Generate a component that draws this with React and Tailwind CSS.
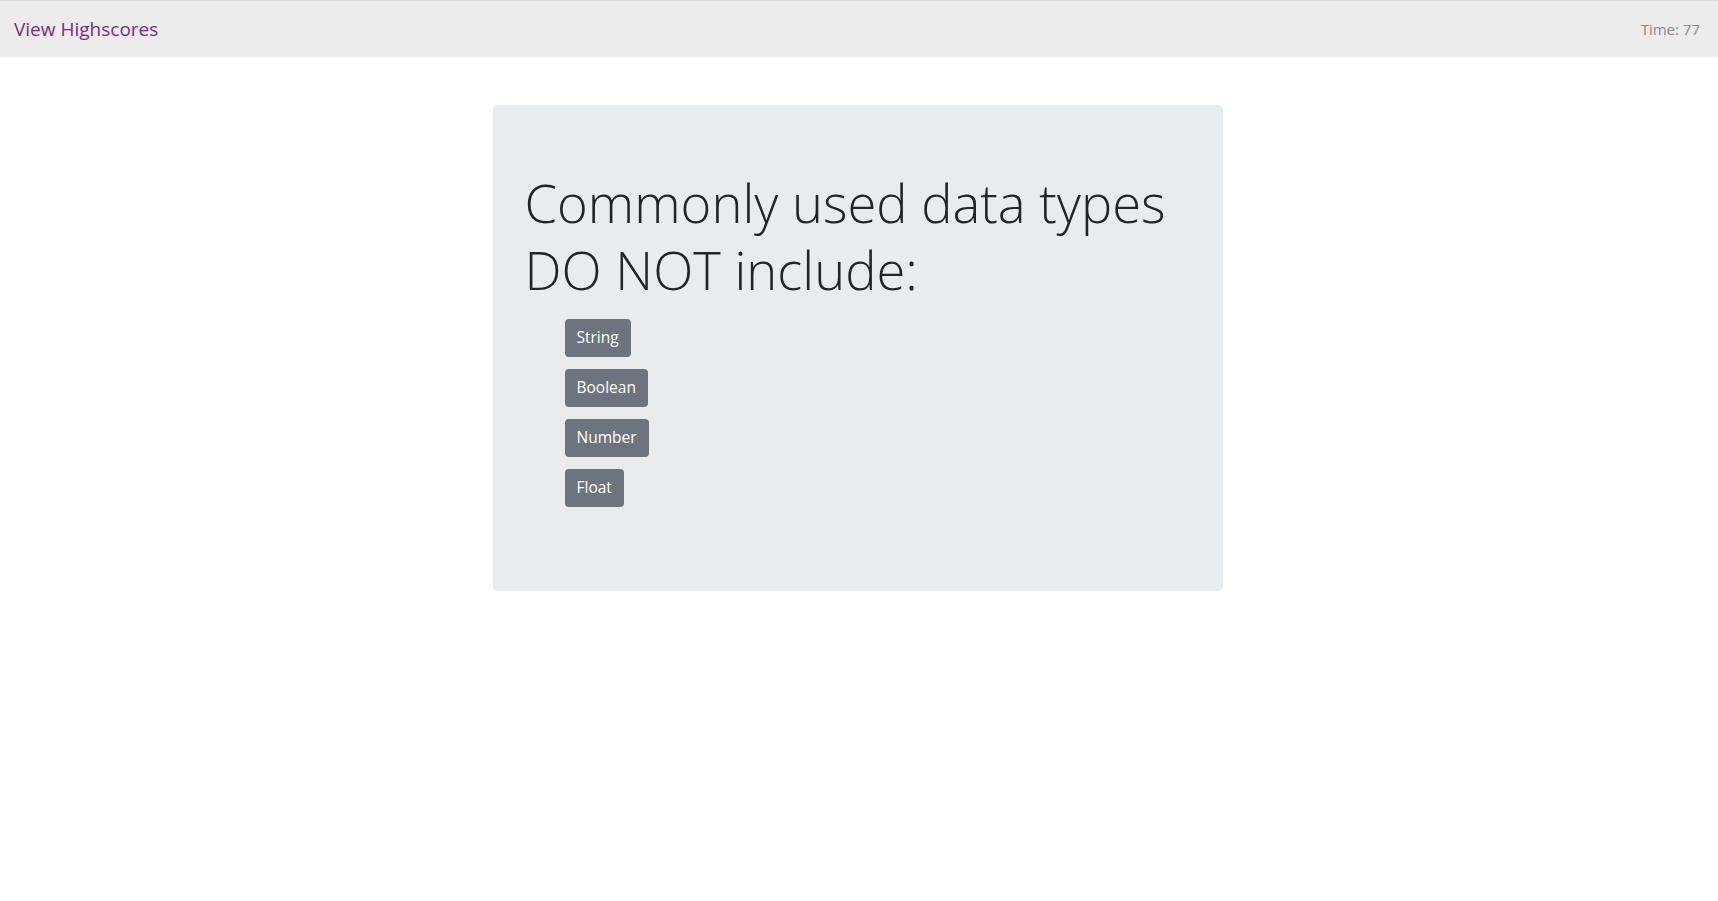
export default function App() {
  const items = ["String", "Boolean", "Number", "Float"];
  return (
    <div className="min-h-[901px] bg-white" style={{ fontFamily: '"Open Sans", "Noto Sans", sans-serif' }}>
      <nav className="flex h-[57px] items-center justify-between border-t border-[#dcdcdc] bg-[#ececec] pl-[14px] pr-[18px]">
        <a className="text-[19px] text-[#7b2a88]">View Highscores</a>
        <span className="text-[15px] text-[#8a8a8a]">Time: 77</span>
      </nav>
      <div className="flex justify-center pr-[3px] pt-[48px]">
        <div className="w-[730px] rounded-[5px] bg-[#e9ecef] px-[32px] pb-[84px] pt-[64px]">
          <h1 className="text-[52.5px] font-light leading-[67px] text-[#212529]">
            Commonly used data types DO NOT include:
          </h1>
          <ul className="mt-[16px] flex flex-col gap-[12px] pl-[40px]">
            {items.map((t) => (
              <li key={t}>
                <button className="h-[38px] rounded-[4px] bg-[#6c757d] px-[12px] text-[15.5px] text-white">
                  {t}
                </button>
              </li>
            ))}
          </ul>
        </div>
      </div>
    </div>
  );
}
